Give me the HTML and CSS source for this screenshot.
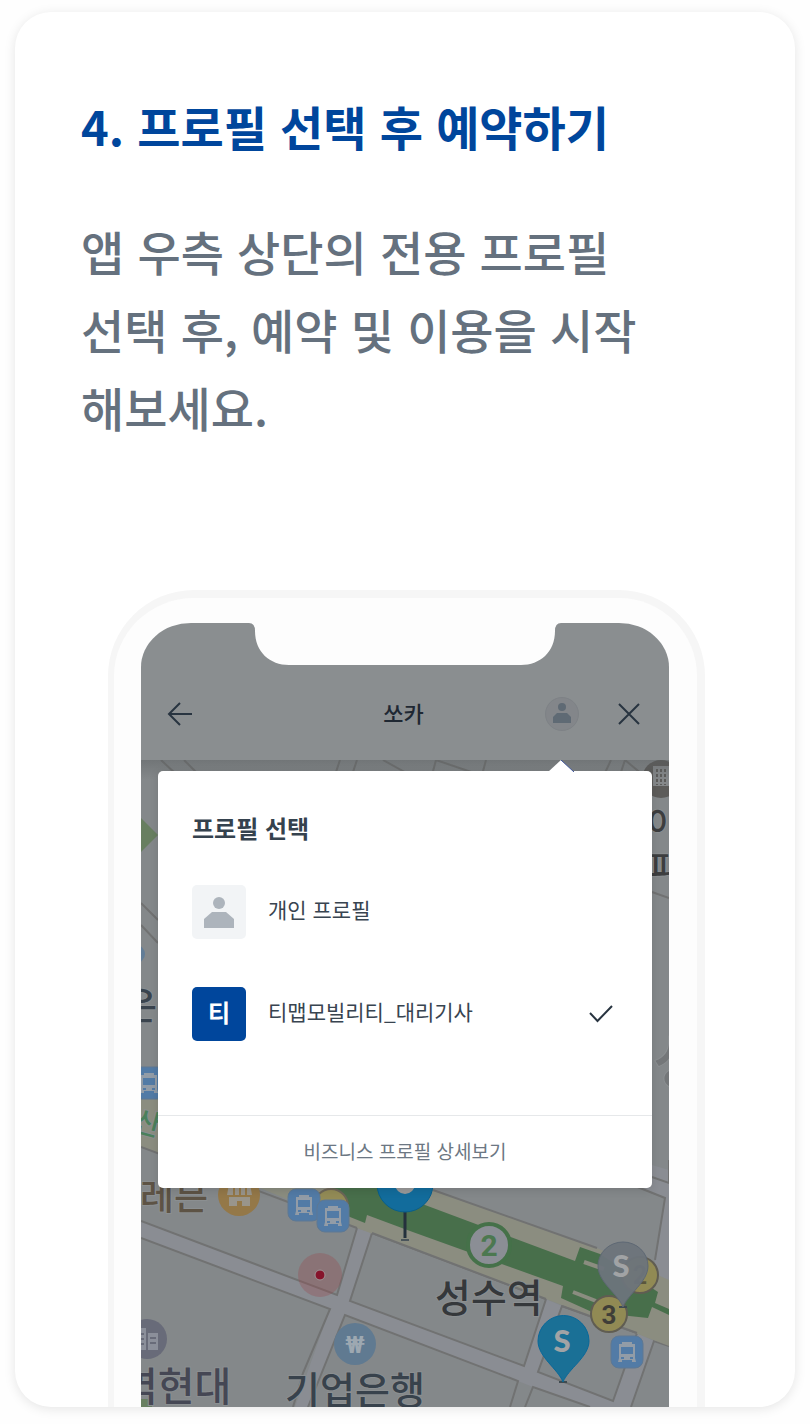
FILE: index.html
```html
<!DOCTYPE html>
<html lang="ko">
<head>
<meta charset="utf-8">
<meta name="viewport" content="width=device-width, initial-scale=1">
<title>프로필 선택 후 예약하기</title>
<link rel="stylesheet" href="styles.css">
</head>
<body>
<main class="card">
  <section class="intro">
    <h1 class="intro-title">4. 프로필 선택 후 예약하기</h1>
    <p class="intro-text">앱 우측 상단의 전용 프로필<br>선택 후, 예약 및 이용을 시작<br>해보세요.</p>
  </section>

  <div class="phone">
    <div class="screen">
      <svg class="notch" viewBox="0 0 300 43" aria-hidden="true"><path d="M-6 -1V0Q0 0 0 8C0 29 15 42 34 42H266C285 42 300 29 300 8Q300 0 306 0V-1Z"/></svg>
      <header class="app-bar">
        <button class="icon-button" type="button" aria-label="뒤로">
          <svg width="26" height="26" viewBox="0 0 26 26"><path class="line" d="M25 13H2M13 2L2 13L13 24"/></svg>
        </button>
        <h2 class="app-title">쏘카</h2>
        <div class="app-actions">
          <button class="icon-button" type="button" aria-label="프로필">
            <svg width="34" height="34" viewBox="0 0 34 34"><circle cx="17" cy="17" r="16.500" fill="#83868a" stroke="#7e8286"/><circle cx="17" cy="10" r="4" fill="#5f6a74"/><path fill="#5f6a74" d="M12 16h10l4 4v6H8v-6z"/></svg>
          </button>
          <button class="icon-button" type="button" aria-label="닫기">
            <svg width="22" height="22" viewBox="0 0 22 22"><path class="line" d="M1 1L21 21M21 1L1 21"/></svg>
          </button>
        </div>
      </header>

      <div class="map-area">
        <svg class="map" viewBox="141 760 528 647" preserveAspectRatio="xMidYMin slice" role="img" aria-label="성수역 주변 지도">
          <defs>
            <linearGradient id="shade" x1="0" y1="0" x2="0" y2="1"><stop offset="0" stop-color="#55595b" stop-opacity=".4"/><stop offset="1" stop-color="#55595b" stop-opacity="0"/></linearGradient>
            <g id="bus"><rect width="32" height="32" rx="8" fill="#527ba6" stroke="#5e7893"/><path fill="#929ca7" d="M11 6h10v2h3v14l1 4h-4v-2H11v2H7l1-4V8h3z"/><path fill="#527ba6" d="M10 11h12v7H10zM10 21h3v2h-3zM19 21h3v2h-3z"/></g>
          </defs>
          <rect x="141" y="760" width="528" height="647" fill="#84888a"/>

          <g class="roads">
            <path fill="#8a8d93" d="M141 1221L337 1295L357 1228L372 1233L350 1301L524 1366L546 1299L562 1306L538 1372L613 1401L637 1333L654 1341L631 1407H525L533 1387L518 1381L345 1315L308 1407H295L330 1309L141 1238Z"/>
            <path fill="#8a8d93" d="M652 1165L669 1170V1407H631L654 1341L655 1260L665 1198L630 1185L652 1177Z"/>
            <path fill="#84888a" d="M525 1407L533 1387L590 1407Z"/>
            <path fill="#84888a" d="M631 1407L654 1341L669 1346V1407Z"/>
            <path d="M141 1221L337 1295L357 1228M141 1238L330 1309L303 1373L293 1407M372 1233L350 1301L524 1366L546 1299ZM308 1407L345 1315L518 1381L510 1407M562 1306L538 1372L613 1401L637 1333ZM525 1407L533 1387L590 1407M631 1407L654 1341L669 1346M630 1184L665 1198L655 1260M652 1177L669 1183V1160"/>
            <path d="M141 903L158 920M141 925L158 943M161 760L177 775M184 760L202 778M340 760L335 775M357 760L352 775M383 760L410 775M432 775L436 760L480 775M482 775L486 760M604 775L611 760M620 775L625 760L643 775M652 892L669 898"/>
          </g>

          <path fill="#8b8d80" d="M141 1085L260 1130L433 1190L597 1248L669 1280V1346L546 1299L357 1228L260 1188L141 1147Z"/>
          <path class="edge" d="M141 1147L288 1202L357 1228M372 1233L546 1299M433 1190L597 1248M562 1306L637 1333"/>
          <path fill="#486f4b" d="M330 1180H360L425 1205L575 1261L580 1247L600 1254L658 1292L655 1303L669 1309V1315L652 1307L648 1318L592 1312L561 1298L563 1286L410 1231L367 1215L365 1223L330 1209Z"/>
          <path fill="none" stroke="#8b8d80" stroke-width="4" d="M584 1262L604 1269M573 1292L596 1301"/>
          <path fill="#687f60" d="M141 818L158 835L141 852Z"/>
          <rect x="141" y="1399" width="11" height="8" fill="#687f60"/>

          <circle cx="136" cy="954" r="9" fill="#627d97"/>
          <circle cx="661" cy="779" r="19" fill="#5d5c5a"/>
          <rect x="653" y="766" width="18" height="20" fill="#85888a"/>
          <path stroke="#5d5c5a" stroke-width="2" stroke-dasharray="3 2" d="M657 769V785M661 769V785M665 769V785"/>

          <g class="labels">
            <text x="122" y="1019" font-size="38" fill="#3a444e">은</text>
            <text x="647" y="836" font-size="34" fill="#3d3e3f">이</text>
            <text x="649" y="880" font-size="34" fill="#3d3e3f">파</text>
            <text x="653" y="1084" font-size="60" fill="#747779">성</text>
            <text x="132" y="1130" font-size="29" fill="#4b805c" transform="rotate(15 132 1130)">산</text>
            <text x="140" y="1210" font-size="37" fill="#5d5345">레븐</text>
            <text x="121" y="1401" font-size="40" fill="#454754">역현대</text>
            <text x="285" y="1404" font-size="38" fill="#38424c">기업은행</text>
            <text x="435" y="1312" font-size="39" fill="#35383b">성수역</text>
          </g>

          <circle cx="239" cy="1195" r="21" fill="#947848"/>
          <path fill="#99958b" d="M229 1184H250L252 1195H227ZM229 1197H250V1206H242V1201H237V1206H229Z"/>
          <path stroke="#947848" stroke-width="2" d="M234 1188V1195M240 1188V1195M246 1188V1195"/>
          <circle cx="331" cy="1206" r="17" fill="#938b56" stroke="#6c6658" stroke-width="2"/>
          <use href="#bus" x="288" y="1189"/>
          <use href="#bus" x="317" y="1200"/>
          <use href="#bus" x="611" y="1336"/>
          <use href="#bus" x="133" y="1067"/>

          <path stroke="#24313d" stroke-width="3" d="M405 1206V1238"/>
          <path stroke="#4a555b" stroke-width="2" d="M401 1240H409"/>
          <circle cx="405" cy="1184" r="28" fill="#126c9c" stroke="#075f8d"/>
          <circle cx="405" cy="1184" r="10" fill="#999"/>

          <circle cx="320" cy="1275" r="22" fill="#984850" fill-opacity=".33"/>
          <circle cx="320" cy="1275" r="5" fill="#86142b" stroke="#a09497"/>

          <circle cx="147" cy="1339" r="20" fill="#686b79"/>
          <path fill="#8b8f9a" d="M137 1328H146V1350H137ZM148 1333H158V1350H148Z"/>
          <path stroke="#686b79" stroke-width="2" d="M138 1334H144M138 1339H144M138 1344H144M150 1338H156M150 1343H156"/>
          <circle cx="355" cy="1344" r="21" fill="#607a91"/>
          <text class="mark" x="355" y="1353" font-size="24" fill="#9da8b1">₩</text>

          <circle cx="489" cy="1245" r="21" fill="#8b8e95" stroke="#457149" stroke-width="4"/>
          <text class="mark" x="489" y="1256" font-size="30" fill="#4c7850">2</text>
          <circle cx="640" cy="1275" r="18" fill="#918a54" stroke="#605d52" stroke-width="2"/>
          <text class="mark" x="640" y="1284" font-size="25" fill="#5b563c">2</text>
          <circle cx="609" cy="1314" r="18" fill="#918a54" stroke="#605d52" stroke-width="2"/>
          <text class="mark" x="609" y="1324" font-size="26" fill="#3f3e38">3</text>

          <path stroke="#3f4b50" stroke-width="2" d="M619 1307H627M559 1382H567"/>
          <path fill="#6d747b" fill-opacity=".95" stroke="#5e6874" d="M623 1307C618 1294 598 1282 598 1266A25 24 0 0 1 648 1266C648 1282 628 1294 623 1307Z"/>
          <path fill="#1a7096" stroke="#08689a" d="M563 1382C558 1369 538 1357 538 1341A25 25 0 0 1 589 1341C589 1357 568 1369 563 1382Z"/>
          <g class="pin-mark"><text x="621" y="1277" font-size="31">S</text><text x="562" y="1352" font-size="31">S</text></g>
          <rect x="141" y="760" width="528" height="20" fill="url(#shade)"/>
        </svg>

        <section class="popover" aria-labelledby="pick">
          <svg class="pointer" width="26" height="12" viewBox="0 0 26 12" aria-hidden="true"><path fill="#fff" d="M0 12L13 0L26 12Z"/><path stroke="#40569a" d="M13 0L26 12"/></svg>
          <h3 class="popover-title" id="pick">프로필 선택</h3>
          <ul class="profiles">
            <li><button class="profile" type="button">
              <svg class="avatar" viewBox="0 0 54 54" aria-hidden="true"><circle cx="27" cy="18" r="6" fill="#adb4bc"/><path fill="#adb4bc" d="M20 27H34L42 34V43H12V34Z"/></svg>
              <span class="profile-name">개인 프로필</span>
            </button></li>
            <li><button class="profile" type="button" aria-pressed="true">
              <span class="avatar avatar-team">티</span>
              <span class="profile-name">티맵모빌리티_대리기사</span>
              <svg class="check" width="24" height="18" viewBox="0 0 24 18" aria-hidden="true"><path class="line" d="M1 8L8.500 16L23 1"/></svg>
            </button></li>
          </ul>
          <a class="details" href="#details">비즈니스 프로필 상세보기</a>
        </section>
      </div>
    </div>
  </div>
</main>
</body>
</html>
```
FILE: styles.css
```css
* {
  box-sizing: border-box;
}

body {
  margin: 0;
  padding: 12px 15px 17px;
  background: #fefefe;
  font-family: "Noto Sans CJK KR", "Noto Sans", sans-serif;
}

h1, h2, h3, p, ul {
  margin: 0;
  padding: 0;
}

button {
  padding: 0;
  border: 0;
  background: none;
  font: inherit;
  color: inherit;
  cursor: pointer;
}

svg {
  display: block;
}

.card {
  overflow: hidden;
  border-radius: 36px;
  background: #fff;
  box-shadow: 0 2px 12px rgba(0, 0, 0, 0.1);
}

.intro {
  padding: 78px 66px 0;
}

.intro-title {
  color: #00469c;
  font-size: 47px;
  font-weight: 700;
  line-height: 72px;
}

.intro-text {
  margin-top: 50px;
  color: #65717e;
  font-size: 47px;
  font-weight: 500;
  line-height: 78px;
}

.phone {
  margin: 144px 90px 0 93px;
  padding: 25px 28px 0 27px;
  border: solid #f6f6f6;
  border-width: 8px 8px 0 6px;
  border-radius: 86px 86px 0 0;
  background: #fdfdfd;
}

.screen {
  position: relative;
  overflow: hidden;
  border-radius: 50px 50px 0 0 / 44px 44px 0 0;
  background: #8a8e90;
}

.notch {
  position: absolute;
  top: 0;
  left: 50%;
  width: 300px;
  margin-left: -150px;
  overflow: visible;
  fill: #fdfdfd;
}

.app-bar {
  display: grid;
  grid-template-columns: 1fr auto 1fr;
  align-items: center;
  padding: 72px 29px 28px 26px;
  height: 137px;
}

.icon-button {
  justify-self: start;
}

.line {
  fill: none;
  stroke: #283440;
  stroke-width: 2;
}

.app-title {
  padding-bottom: 4px;
  color: #1f2833;
  font-size: 22px;
  font-weight: 500;
  line-height: 32px;
}

.app-actions {
  display: flex;
  align-items: center;
  justify-content: flex-end;
  gap: 39px;
}

.map-area {
  position: relative;
  padding: 11px 17px 219px;
}

.map {
  position: absolute;
  inset: 0;
  width: 100%;
  height: 100%;
}

.roads path,
.edge {
  stroke: #717272;
  stroke-width: 2;
  fill: none;
}

.roads path[fill] {
  stroke: none;
  fill: #8a8d93;
}

.roads path[fill="#84888a"] {
  fill: #84888a;
}

.labels {
  font-weight: 500;
  stroke: #8b8f91;
  stroke-width: 2;
  paint-order: stroke;
}

.mark,
.pin-mark {
  font-family: Roboto, "Noto Sans", sans-serif;
  font-weight: 700;
  text-anchor: middle;
}

.pin-mark {
  font-family: Lato, sans-serif;
  font-weight: 900;
  fill: #a1a3a5;
}

.popover {
  position: relative;
  border-radius: 5px;
  background: #fff;
  box-shadow: 0 2px 10px rgba(0, 0, 0, 0.12);
}

.pointer {
  position: absolute;
  top: -11px;
  right: 78px;
}

.popover-title {
  padding: 40px 34px 0;
  color: #35424e;
  font-size: 24px;
  font-weight: 700;
  line-height: 34px;
}

.profiles {
  display: grid;
  gap: 48px;
  padding: 40px 34px 74px;
  list-style: none;
}

.profile {
  display: flex;
  align-items: center;
  width: 100%;
  gap: 22px;
  text-align: left;
}

.avatar {
  flex: none;
  width: 54px;
  height: 54px;
  border-radius: 5px;
  background: #f2f4f6;
}

.avatar-team {
  background: #00469c;
  color: #fff;
  font-size: 24px;
  font-weight: 700;
  line-height: 50px;
  text-align: center;
}

.profile-name {
  padding-bottom: 6px;
  color: #384450;
  font-size: 21px;
  line-height: 30px;
}

.check {
  margin: 0 5px 0 auto;
}

.details {
  display: block;
  padding: 20px 34px 22px;
  border-top: 1px solid #e6e8ea;
  color: #6c7783;
  font-size: 19px;
  line-height: 30px;
  text-align: center;
  text-decoration: none;
}
```
